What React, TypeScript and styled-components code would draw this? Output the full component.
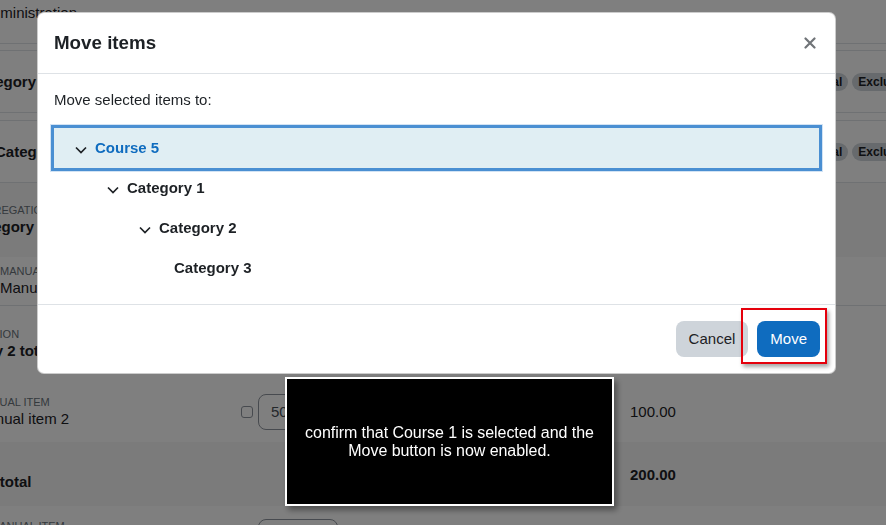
import React from "react";
import styled, { createGlobalStyle } from "styled-components";

const GlobalStyle = createGlobalStyle`
  html, body {
    margin: 0;
    padding: 0;
    background: #fff;
    overflow: hidden;
  }
  body {
    font-family: "Liberation Sans", Arial, sans-serif;
    color: #1d2125;
  }
  * { box-sizing: border-box; }
`;

const Page = styled.div`
  position: relative;
  width: 886px;
  height: 525px;
  overflow: hidden;
  background: #fff;
`;

const Breadcrumb = styled.div`
  height: 43px;
  padding-top: 4px;
  margin-left: -18px;
  font-size: 15px;
  line-height: 18px;
`;

const HeadRow = styled.div`
  height: 8px;
  border-top: 1px solid #dee2e6;
  border-bottom: 1px solid #dee2e6;
`;

const Spacer = styled.div`
  height: 8px;
  border-bottom: 1px solid #dee2e6;
`;

const Row = styled.div<{ $h: number; $shade?: boolean; $line?: boolean }>`
  display: grid;
  grid-template-columns: 236px 389px 170px 1fr;
  align-items: center;
  height: ${(p) => p.$h}px;
  background: ${(p) => (p.$shade ? "#f6f6f6" : "#fff")};
  border-bottom: ${(p) => (p.$line ? "1px solid #dee2e6" : "none")};
`;

const NameCell = styled.div<{ $indent: number; $top?: number }>`
  display: flex;
  flex-direction: column;
  margin-left: ${(p) => p.$indent}px;
  padding-top: ${(p) => p.$top || 0}px;
  white-space: nowrap;
`;

const TypeLabel = styled.span`
  font-size: 11px;
  line-height: 14px;
  text-transform: uppercase;
  color: #6a737b;
`;

const ItemName = styled.span<{ $bold?: boolean }>`
  font-size: 15px;
  line-height: 20px;
  font-weight: ${(p) => (p.$bold ? 700 : 400)};
`;

const Controls = styled.div<{ $top?: number }>`
  display: flex;
  align-items: center;
  gap: 5px;
  padding-left: 5px;
  align-self: ${(p) => (p.$top !== undefined ? "start" : "center")};
  margin-top: ${(p) => p.$top || 0}px;
`;

const Check = styled.span`
  width: 12px;
  height: 12px;
  border: 1px solid #8f959e;
  border-radius: 3px;
  background: #fff;
`;

const WeightInput = styled.div`
  width: 80px;
  height: 36px;
  padding: 0 12px;
  display: flex;
  align-items: center;
  border: 1px solid #8f959e;
  border-radius: 8px;
  font-size: 15px;
  color: #495057;
`;

const Value = styled.div<{ $bold?: boolean }>`
  padding-left: 5px;
  font-size: 15px;
  font-weight: ${(p) => (p.$bold ? 700 : 400)};
`;

const Badges = styled.div`
  display: flex;
  gap: 4px;
  white-space: nowrap;
`;

const Badge = styled.span`
  background: #ced4da;
  color: #1d2125;
  font-size: 12px;
  font-weight: 700;
  line-height: 12px;
  padding: 3px 6px;
  border-radius: 10px;
`;

const Backdrop = styled.div`
  position: fixed;
  inset: 0;
  background: rgba(0, 0, 0, 0.5);
`;

const Modal = styled.div`
  position: fixed;
  top: 12px;
  left: 37px;
  width: 799px;
  background: #fff;
  border: 1px solid rgba(0, 0, 0, 0.2);
  border-radius: 7px;
`;

const ModalHeader = styled.div`
  height: 61px;
  display: flex;
  align-items: center;
  justify-content: space-between;
  padding: 0 19px 0 16px;
  border-bottom: 1px solid #dee2e6;
`;

const Title = styled.h5`
  margin: 0;
  font-size: 18.75px;
  line-height: 22px;
  font-weight: 700;
  color: #1d2125;
`;

const CloseBtn = styled.button`
  border: 0;
  padding: 0;
  background: none;
  display: flex;
  cursor: pointer;
`;

const ModalBody = styled.div`
  padding: 15px 16px 16px;
`;

const Lead = styled.p`
  margin: 0 0 16px;
  font-size: 15px;
  line-height: 22.5px;
`;

const Tree = styled.div`
  display: flex;
  flex-direction: column;
`;

const TreeRow = styled.div<{ $level: number; $selected?: boolean; $leaf?: boolean }>`
  height: 40px;
  display: flex;
  align-items: center;
  padding-left: ${(p) => 21 + p.$level * 32 + (p.$leaf ? 3 : 0)}px;
  font-size: 15px;
  font-weight: 700;
  color: ${(p) => (p.$selected ? "#0f6cbf" : "#1d2125")};
  background: ${(p) => (p.$selected ? "#e0eef3" : "transparent")};
  box-shadow: ${(p) =>
    p.$selected ? "0 0 0 3px #4a8fd2, 0 0 0 4px rgba(74, 143, 210, 0.25)" : "none"};
`;

const Chevron = styled.svg`
  width: 12px;
  height: 8px;
  margin: 4px 8px 0 0;
  flex-shrink: 0;
`;

const ModalFooter = styled.div`
  display: flex;
  justify-content: flex-end;
  gap: 9px;
  padding: 16px 15px 16px;
  border-top: 1px solid #dee2e6;
`;

const Btn = styled.button<{ $primary?: boolean }>`
  position: relative;
  height: 36px;
  padding: 0 13px;
  border: 0;
  border-radius: 8px;
  font-family: "Liberation Sans", Arial, sans-serif;
  font-size: 15px;
  background: ${(p) => (p.$primary ? "#0f6cbf" : "#ced4da")};
  color: ${(p) => (p.$primary ? "#fff" : "#1d2125")};
  cursor: pointer;
`;

const Highlight = styled.span`
  position: absolute;
  left: -16px;
  top: -13px;
  right: -7px;
  bottom: -7px;
  border: 2px solid #e5000c;
  box-shadow: 2px 3px 4px rgba(0, 0, 0, 0.35);
  pointer-events: none;
`;

const Tip = styled.div`
  position: fixed;
  left: 285px;
  top: 377px;
  width: 329px;
  height: 129px;
  display: flex;
  align-items: center;
  justify-content: center;
  padding: 0 16px;
  background: #000;
  border: 2px solid #fff;
  box-shadow: 3px 4px 6px rgba(0, 0, 0, 0.4);
  color: #fff;
  font-family: "Liberation Sans", Arial, sans-serif;
  font-size: 16px;
  line-height: 18px;
  letter-spacing: -0.05px;
  text-align: center;
`;

const tree = [
  { label: "Course 5", level: 0, selected: true },
  { label: "Category 1", level: 1 },
  { label: "Category 2", level: 2 },
  { label: "Category 3", level: 3, leaf: true },
];

function DownChevron() {
  return (
    <Chevron viewBox="0 0 12 8">
      <polyline points="1,1.5 6,6.5 11,1.5" fill="none" stroke="#1d2125" strokeWidth="1.7" />
    </Chevron>
  );
}

export default function App() {
  return (
    <>
      <GlobalStyle />
      <Page>
        <Breadcrumb>Administration</Breadcrumb>
        <HeadRow />
        <Row $h={62} $line>
          <NameCell $indent={-29}>
            <ItemName $bold>Category 1</ItemName>
          </NameCell>
          <div />
          <div />
          <Badges>
            <Badge>Natural</Badge>
            <Badge>Excluded from empty grades</Badge>
          </Badges>
        </Row>
        <Spacer />
        <Row $h={62} $line>
          <NameCell $indent={-5}>
            <ItemName $bold>Category 2</ItemName>
          </NameCell>
          <div />
          <div />
          <Badges>
            <Badge>Natural</Badge>
            <Badge>Excluded from empty grades</Badge>
          </Badges>
        </Row>
        <Row $h={74} $shade>
          <NameCell $indent={-31}>
            <TypeLabel>Aggregation</TypeLabel>
            <ItemName $bold>Category 3 total</ItemName>
          </NameCell>
        </Row>
        <Row $h={49} $line>
          <NameCell $indent={0}>
            <TypeLabel>Manual item</TypeLabel>
            <ItemName>Manual item 1</ItemName>
          </NameCell>
        </Row>
        <Row $h={75}>
          <NameCell $indent={-62}>
            <TypeLabel>Aggregation</TypeLabel>
            <ItemName $bold>Category 2 total</ItemName>
          </NameCell>
        </Row>
        <Row $h={61}>
          <NameCell $indent={-25}>
            <TypeLabel>Manual item</TypeLabel>
            <ItemName>Manual item 2</ItemName>
          </NameCell>
          <Controls>
            <Check />
            <WeightInput>50.0</WeightInput>
          </Controls>
          <Value>100.00</Value>
        </Row>
        <Row $h={64} $shade>
          <NameCell $indent={-56} $top={15}>
            <ItemName $bold>Course total</ItemName>
          </NameCell>
          <div />
          <Value $bold>200.00</Value>
        </Row>
        <Row $h={60}>
          <NameCell $indent={-10}>
            <TypeLabel>Manual item</TypeLabel>
            <ItemName>Manual item 3</ItemName>
          </NameCell>
          <Controls $top={13}>
            <Check />
            <WeightInput>50.0</WeightInput>
          </Controls>
        </Row>
      </Page>

      <Backdrop />

      <Modal>
        <ModalHeader>
          <Title>Move items</Title>
          <CloseBtn aria-label="Close">
            <svg width="12" height="12" viewBox="0 0 12 12">
              <path d="M1.5 1.5 L10.5 10.5 M10.5 1.5 L1.5 10.5" stroke="#707478" strokeWidth="2.2" strokeLinecap="round" />
            </svg>
          </CloseBtn>
        </ModalHeader>
        <ModalBody>
          <Lead>Move selected items to:</Lead>
          <Tree>
            {tree.map((t) => (
              <TreeRow key={t.label} $level={t.level} $selected={t.selected} $leaf={t.leaf}>
                {!t.leaf && <DownChevron />}
                {t.label}
              </TreeRow>
            ))}
          </Tree>
        </ModalBody>
        <ModalFooter>
          <Btn>Cancel</Btn>
          <Btn $primary>
            Move
            <Highlight />
          </Btn>
        </ModalFooter>
      </Modal>

      <Tip>confirm that Course 1 is selected and the Move button is now enabled.</Tip>
    </>
  );
}
